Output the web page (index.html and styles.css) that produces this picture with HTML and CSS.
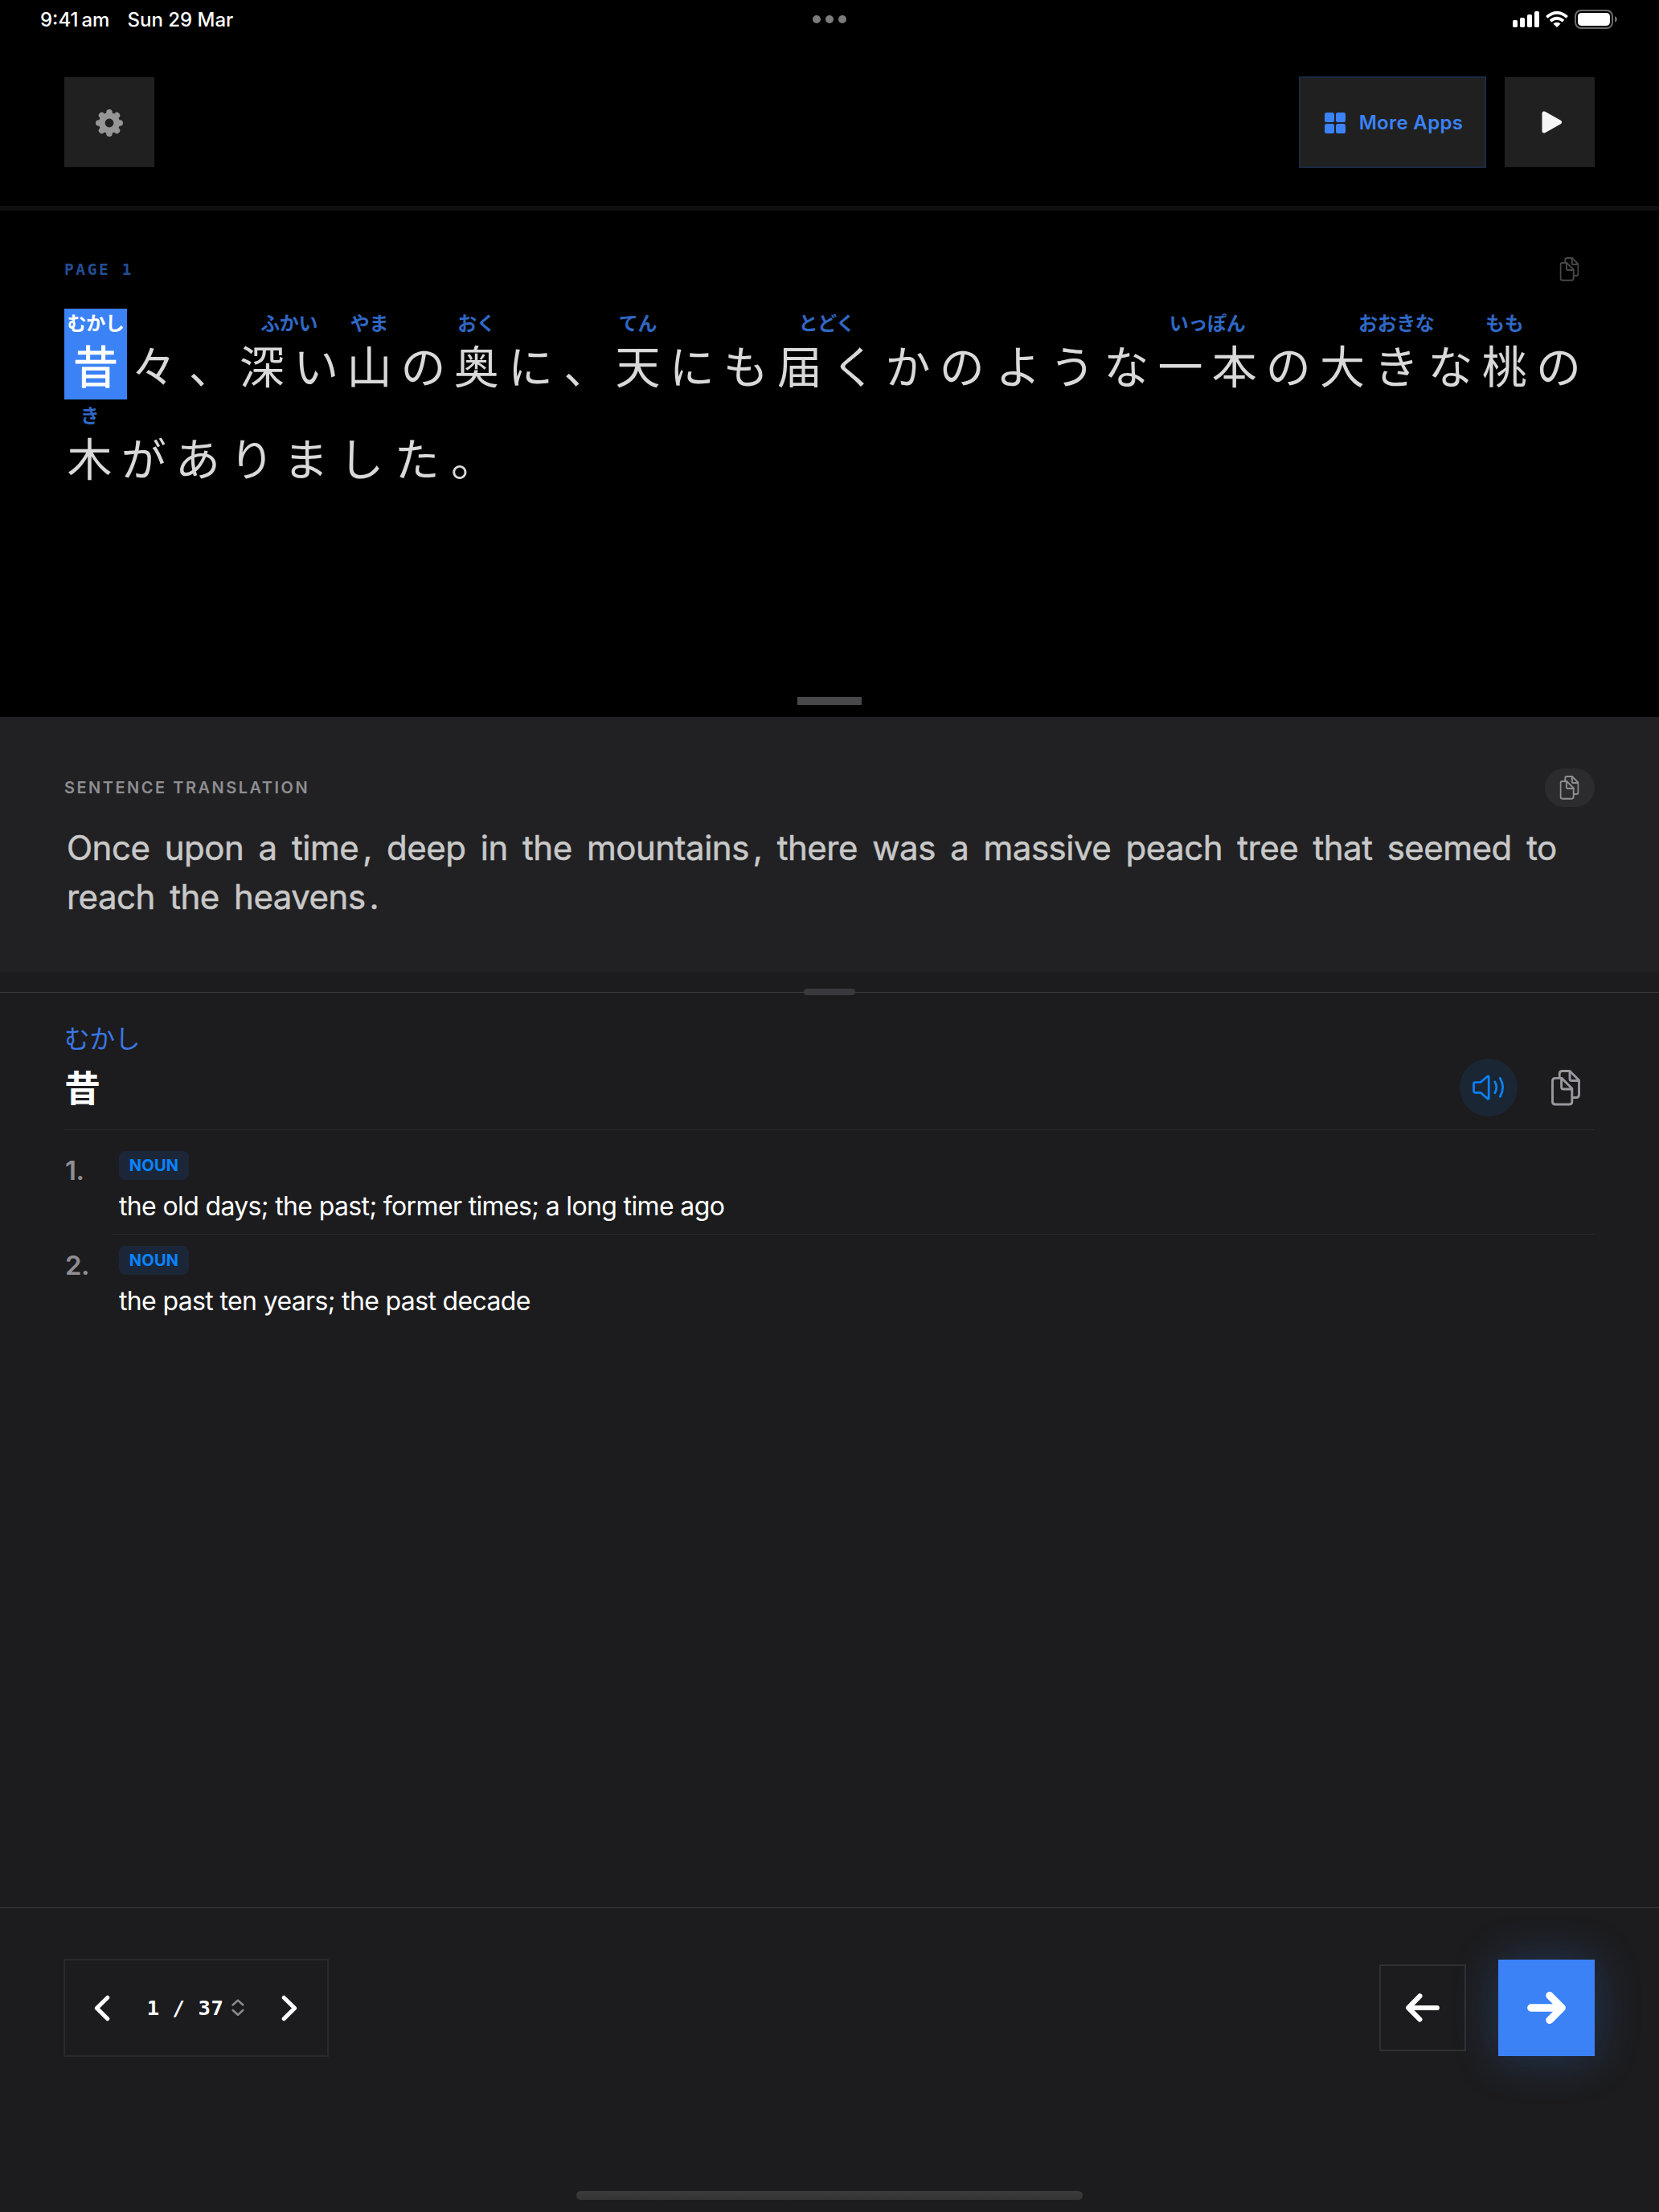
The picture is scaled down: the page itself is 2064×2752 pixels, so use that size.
FILE: index.html
```html
<!DOCTYPE html>
<html lang="en">
<head>
<meta charset="utf-8">
<title>Reader</title>
<link rel="stylesheet" href="styles.css">
</head>
<body>
<svg class="defs" width="0" height="0" aria-hidden="true">
  <symbol id="copy" viewBox="0 0 36 45">
    <g fill="none" stroke="currentColor" stroke-width="2.9" stroke-linejoin="round" stroke-linecap="round">
      <path d="M5 10.4H13L25.8 23.2V39.5Q25.8 43 22.3 43H5Q1.5 43 1.5 39.5V13.9Q1.5 10.4 5 10.4Z"/>
      <path d="M12.6 10.8V21.5Q12.6 24 15.1 24H25.4"/>
      <path d="M10.2 9V5Q10.2 1.5 13.7 1.5H23L34.5 13V31Q34.5 34.5 31 34.5H27.5"/>
      <path d="M23 2V11.2Q23 13.5 25.3 13.5H34"/>
    </g>
  </symbol>
</svg>

<header class="status">
  <div class="clock"><span>9:41<span class="ampm">am</span></span><span>Sun 29 Mar</span></div>
  <div class="dots"><i></i><i></i><i></i></div>
  <div class="indicators">
    <svg width="33" height="20" viewBox="0 0 33 20" fill="#fff"><rect x="0" y="11" width="6" height="9" rx="1.8"/><rect x="9" y="8" width="6" height="12" rx="1.8"/><rect x="18" y="4" width="6" height="16" rx="1.8"/><rect x="27" y="0" width="6" height="20" rx="1.8"/></svg>
    <svg class="wifi" width="28" height="20" viewBox="0 0 28 20"><g fill="none" stroke="#fff" stroke-width="3.7"><path d="M1.3 7.3Q14 -3.6 26.7 7.3"/><path d="M6 12.2Q14 5.2 22 12.2"/></g><path d="M14 20L9.4 15.5Q14 11.8 18.6 15.5Z" fill="#fff"/></svg>
    <svg class="battery" width="54" height="24" viewBox="0 0 54 24"><rect x="1" y="1" width="46" height="22" rx="7" fill="none" stroke="#6b6b6b" stroke-width="2"/><rect x="4" y="4" width="40" height="16" rx="4.5" fill="#fff"/><path d="M50 8Q53 9.3 53 12T50 16Z" fill="#6b6b6b"/></svg>
  </div>
</header>

<nav class="toolbar">
  <button class="tool">
    <svg width="34" height="34" viewBox="-17 -17 34 34" stroke="#969696" fill="none"><circle r="9.2" stroke-width="7.6"/><g stroke-width="7.6" stroke-linecap="round"><path d="M0 -12V-13.2M0 12V13.2M-12 0H-13.2M12 0H13.2M8.4 8.4L9.4 9.4M-8.4 8.4L-9.4 9.4M8.4 -8.4L9.4 -9.4M-8.4 -8.4L-9.4 -9.4"/></g></svg>
  </button>
  <div class="tool-group">
    <button class="more">
      <svg width="26" height="26" viewBox="0 0 26 26" fill="#3b82f6"><rect width="12" height="12" rx="2.6"/><rect x="14" width="12" height="12" rx="2.6"/><rect y="14" width="12" height="12" rx="2.6"/><rect x="14" y="14" width="12" height="12" rx="2.6"/></svg>
      <span>More Apps</span>
    </button>
    <button class="tool play">
      <svg width="26" height="28" viewBox="0 0 26 28"><path d="M3 3V25L22.5 14Z" fill="#f5f5f5" stroke="#f5f5f5" stroke-width="5" stroke-linejoin="round"/></svg>
    </button>
  </div>
</nav>

<section class="page-panel">
  <div class="page-head"><span class="page-label">PAGE 1</span><svg class="copy-small dim" viewBox="0 0 36 45"><use href="#copy"/></svg></div>
  <div class="sentence" lang="ja">
    <div class="line">
      <span class="word active"><small>むかし</small><b>昔</b></span><span class="word"><b>々</b></span><span class="word comma"><b>、</b></span><span class="word"><small>ふかい</small><b>深い</b></span><span class="word tight"><small>やま</small><b>山</b></span><span class="word"><b>の</b></span><span class="word tight"><small>おく</small><b>奥</b></span><span class="word"><b>に</b></span><span class="word comma near"><b>、</b></span><span class="word tight"><small>てん</small><b>天</b></span><span class="word"><b>に</b></span><span class="word"><b>も</b></span><span class="word"><small>とどく</small><b>届く</b></span><span class="word"><b>か</b></span><span class="word"><b>の</b></span><span class="word loose"><b>よう</b></span><span class="word"><b>な</b></span><span class="word"><small>いっぽん</small><b>一本</b></span><span class="word"><b>の</b></span><span class="word"><small>おおきな</small><b>大きな</b></span><span class="word"><small>もも</small><b>桃</b></span><span class="word"><b>の</b></span>
    </div>
    <div class="line second">
      <span class="word"><small>き</small><b>木</b></span><span class="word"><b>が</b></span><span class="word"><b>あり</b></span><span class="word spaced"><b>まし</b></span><span class="word"><b>た</b></span><span class="word stop"><b>。</b></span>
    </div>
  </div>
  <div class="grip"></div>
</section>

<section class="translation">
  <div class="translation-head"><span>SENTENCE TRANSLATION</span><button class="pill"><svg class="copy-small" viewBox="0 0 36 45"><use href="#copy"/></svg></button></div>
  <p class="translation-text">Once upon a time<i>,</i> deep in the mountains<i>,</i> there was a massive peach tree that seemed to<br>reach the heavens<i>.</i></p>
</section>

<div class="divider"><div class="divider-grip"></div></div>

<main class="dictionary">
  <div class="entry-head">
    <div lang="ja"><div class="reading">むかし</div><h1>昔</h1></div>
    <div class="entry-actions">
      <button class="speak"><svg width="40" height="32" viewBox="0 0 40 32" fill="none" stroke="#0a84ff" stroke-width="2.7" stroke-linecap="round" stroke-linejoin="round"><path d="M3.5 9.5H10L18.5 2.2Q20.2 1 20.2 3V29Q20.2 31 18.5 29.8L10 22.3H3.5Q1.5 22.3 1.5 20.3V11.5Q1.5 9.5 3.5 9.5Z"/><path d="M27.8 9Q31.8 15.8 27.8 22.8M34.3 4.5Q41 15.8 34.3 27.3"/></svg></button>
      <svg class="copy-large" viewBox="0 0 36 45"><use href="#copy"/></svg>
    </div>
  </div>
  <ol class="senses">
    <li><span class="num">1.</span><div class="sense"><span class="tag">NOUN</span><p>the old days; the past; former times; a long time ago</p></div></li>
    <li><span class="num">2.</span><div class="sense"><span class="tag">NOUN</span><p>the past ten years; the past decade</p></div></li>
  </ol>
</main>

<footer class="footer">
  <div class="pager">
    <svg width="20" height="33" viewBox="0 0 20 33"><path d="M16.8 3.2L3.4 16.4L16.8 29.6" class="chev"/></svg>
    <div class="count"><span>1 / 37</span><svg width="16" height="22" viewBox="0 0 16 22"><path d="M1.8 7.3L8 1.6L14.2 7.3M1.8 14L8 19.7L14.2 14" fill="none" stroke="#8a8a8a" stroke-width="2.6" stroke-linecap="round" stroke-linejoin="round"/></svg></div>
    <svg width="20" height="33" viewBox="0 0 20 33"><path d="M3.2 3.2L16.6 16.4L3.2 29.6" class="chev"/></svg>
  </div>
  <div class="steps">
    <button class="prev"><svg width="42" height="36" viewBox="0 0 42 36"><path d="M17.4 3.3L3.2 18L17.4 32.4M4 18H38.8" fill="none" stroke="#fff" stroke-width="6.2" stroke-linecap="round" stroke-linejoin="round"/></svg></button>
    <button class="next"><svg width="48" height="40" viewBox="0 0 48 40"><path d="M28 4.7L43.2 20L28 35.3M42 20H4.8" fill="none" stroke="#fff" stroke-width="9.4" stroke-linecap="round" stroke-linejoin="round"/></svg></button>
  </div>
</footer>
<div class="home"></div>
</body>
</html>
```

FILE: styles.css
```css
* { box-sizing: border-box; margin: 0; padding: 0; }
body { width: 2064px; height: 2752px; overflow: hidden; background: #1c1c1e; color: #fff; font-family: Inter, "Noto Sans CJK JP", sans-serif; display: flex; flex-direction: column; }
button { border: 0; background: none; color: inherit; font: inherit; display: flex; align-items: center; justify-content: center; }
svg { display: block; flex: none; }
i { font-style: normal; }
.defs { position: absolute; }

.status { height: 48px; flex: none; background: #000; display: grid; grid-template-columns: 1fr auto 1fr; align-items: center; padding: 0 51px 0 50px; }
.clock { display: flex; gap: 22px; font-size: 24px; font-weight: 500; letter-spacing: 0; white-space: nowrap; }
.ampm { margin-left: 4px; }
.dots { display: flex; gap: 6px; }
.dots i { width: 10px; height: 10px; border-radius: 50%; background: #7c7c7c; }
.indicators { display: flex; align-items: center; justify-content: flex-end; }
.wifi { margin-left: 8px; }
.battery { margin-left: 8px; }

.toolbar { height: 214px; flex: none; background: #000; border-bottom: 6px solid #0f0f0f; padding: 47px 80px 0; display: flex; justify-content: space-between; align-items: flex-start; }
.tool { width: 112px; height: 112px; background: #202020; margin-top: 1px; }
.tool svg { position: relative; top: 1px; }
.tool-group { display: flex; gap: 23px; }
.more { width: 233px; height: 114px; background: #202020; border: 2px solid #1b2a43; color: #3b82f6; font-size: 24px; font-weight: 600; letter-spacing: 0.35px; gap: 17px; padding: 1px 0 0 3px; white-space: nowrap; }
.play svg { left: 3px; top: 0; }

.page-panel { height: 630px; flex: none; background: #000; padding: 58px 80px 0; position: relative; }
.page-head { height: 30px; display: flex; justify-content: space-between; align-items: center; padding-right: 19px; }
.page-label { font: bold 19.5px "DejaVu Sans Mono", monospace; letter-spacing: 2.6px; color: #234e94; }
.copy-small { width: 25px; height: 30px; color: #8e8e93; }
.copy-small.dim { color: #48484a; }
.sentence { padding-top: 34px; font-family: "Noto Sans CJK JP", sans-serif; }
.line { display: flex; height: 115px; }
.word { height: 113px; display: flex; flex-direction: column; align-items: center; justify-content: flex-end; }
.word small { font-size: 24px; line-height: 34px; height: 36px; letter-spacing: -0.4px; font-weight: 700; color: #2f68c5; white-space: nowrap; }
.word b { font-size: 56px; line-height: 66px; height: 77px; font-weight: 400; letter-spacing: 11.2px; padding-left: 11.2px; margin-right: -5.6px; margin-left: -5.6px; color: #d9d9d9; }
.word.active { width: 78px; background: #3b82f6; }
.word.active small { color: #fff; }
.word.active b { color: #fff; -webkit-text-stroke: 0.8px #fff; }
.word.tight { margin-left: -1px; }
.word.loose { margin-left: 3px; }
.comma b { transform: translateX(4px); }
.comma.near b { transform: translateX(2px); }
.spaced b { letter-spacing: 13.2px; }
.stop b { transform: translateX(3px); }
.second .word:first-child { margin-left: -2px; }
.grip { position: absolute; left: 992px; bottom: 15px; width: 80px; height: 10px; background: #48484a; }

.translation { height: 318px; flex: none; background: #212123; padding: 64px 80px 0; }
.translation-head { height: 48px; display: flex; justify-content: space-between; align-items: center; font-size: 20px; font-weight: 600; letter-spacing: 2.5px; color: #8e8e93; }
.pill { width: 62px; height: 48px; border-radius: 24px; background: #2c2c2e; padding-right: 1px; }
.translation-text { padding: 20px 0 0 3px; font-size: 42px; font-weight: 400; -webkit-text-stroke: 0.5px #c8c8c8; line-height: 61px; letter-spacing: -0.5px; word-spacing: 7px; color: #c8c8c8; white-space: nowrap; }
.translation-text i { margin-left: 5px; }

.divider { height: 25px; flex: none; border-bottom: 1px solid #3f3f42; display: flex; justify-content: center; align-items: flex-end; }
.divider-grip { width: 64px; height: 8px; border-radius: 4px; background: #39393d; margin-bottom: -4px; z-index: 1; }

.dictionary { height: 1138px; flex: none; padding: 36px 80px 0; }
.entry-head { height: 135px; border-bottom: 1px solid #29292b; display: flex; justify-content: space-between; }
.reading { font-family: "Noto Sans CJK JP", sans-serif; font-size: 31.5px; line-height: 39px; color: #3b78e7; }
h1 { font-family: "Noto Sans CJK JP", sans-serif; font-size: 45px; line-height: 60px; font-weight: 700; margin-top: 12px; }
.entry-actions { display: flex; align-items: center; padding: 30px 18px 0 0; height: 130px; gap: 42px; }
.speak { width: 72px; height: 72px; border-radius: 50%; background: #1b2635; margin-top: 4px; }
.copy-large { width: 36px; height: 45px; color: #98989f; margin-top: 4px; }
.senses { list-style: none; }
.senses li { display: flex; height: 118px; }
.num { width: 60px; padding: 27px 0 0 1px; height: 118px; font-size: 33px; font-weight: 600; line-height: 46px; letter-spacing: -0.5px; color: #8e8e93; }
.sense { flex: 1; padding: 14px 0 0 8px; margin-top: 12px; height: 118px; border-bottom: 1px solid #29292b; }
.senses li:last-child .sense { border-bottom: 0; }
.tag { display: block; width: 87px; height: 36px; border-radius: 8px; background: #1b2738; color: #0a84ff; font-size: 20px; font-weight: 700; line-height: 37px; text-align: center; letter-spacing: 0.3px; }
.sense p { font-size: 32px; line-height: 40px; margin-top: 13px; letter-spacing: -0.64px; white-space: nowrap; }

.footer { height: 349px; flex: none; border-top: 1px solid #3a3a3c; padding: 63px 80px 0 79px; display: flex; justify-content: space-between; align-items: flex-start; }
.pager { width: 330px; height: 122px; border: 2px solid #29292b; display: flex; justify-content: space-between; align-items: center; padding: 0 37px 0 36px; }
.chev { fill: none; stroke: #fff; stroke-width: 5; stroke-linecap: round; stroke-linejoin: round; }
.count { display: flex; align-items: center; gap: 10px; font: bold 25.5px "DejaVu Sans Mono", monospace; letter-spacing: 0.6px; }
.steps { display: flex; align-items: center; gap: 40px; padding-top: 1px; }
.prev { width: 108px; height: 108px; border: 2px solid #303032; }
.next { width: 120px; height: 120px; background: #3b82f6; box-shadow: 0 2px 56px rgba(59, 130, 246, 0.28); }
.home { flex: none; width: 630px; height: 11px; border-radius: 6px; align-self: center; background: linear-gradient(#3c3c3c, #333); margin-top: 4px; }
```
